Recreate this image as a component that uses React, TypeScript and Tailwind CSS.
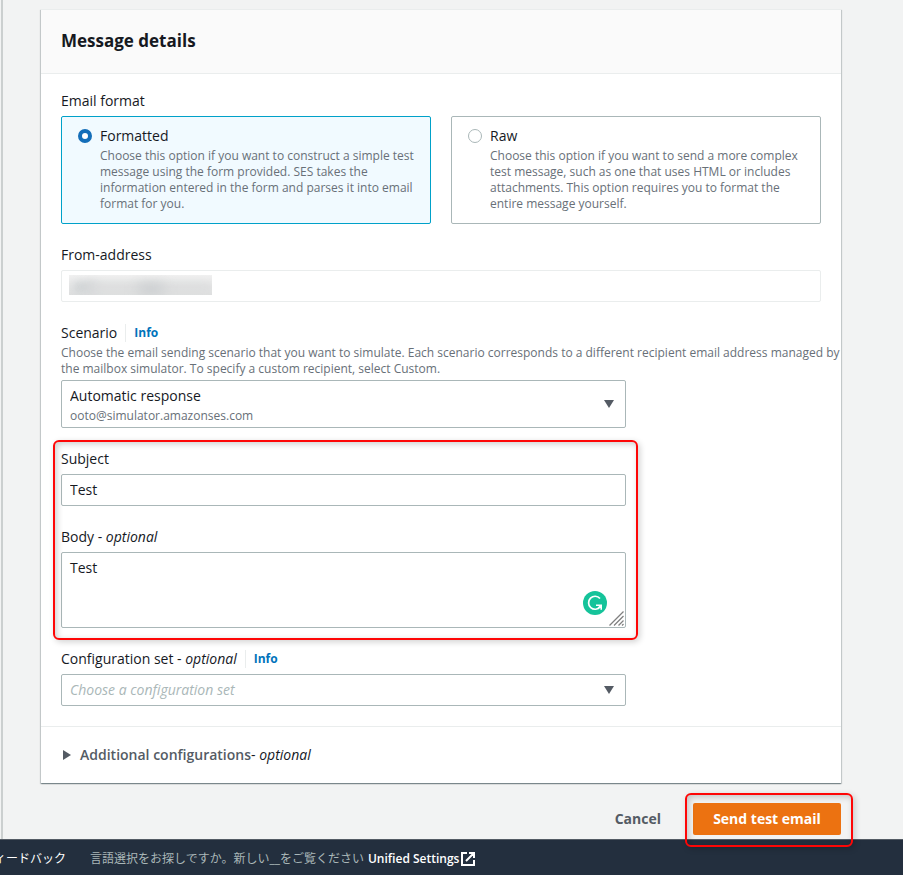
import { useState, type ReactNode } from "react";

const inputBase =
  "block w-full rounded-xs border border-[#aab7b8] bg-white px-2 text-sm text-[#16191f] outline-none";

function Label({ htmlFor, optional, info, children }: { htmlFor?: string; optional?: boolean; info?: boolean; children: ReactNode }) {
  return (
    <div className="flex h-[22px] items-center text-sm leading-[22px]">
      <label htmlFor={htmlFor}>
        {children}
        {optional && (
          <>
            {" - "}
            <i>optional</i>
          </>
        )}
      </label>
      {info && (
        <a href="#info" className="ml-2 border-l border-[#eaeded] pl-2 text-xs leading-[18px] font-bold text-[#0073bb]">
          Info
        </a>
      )}
    </div>
  );
}

function Caret() {
  return (
    <svg viewBox="0 0 10 8" className="pointer-events-none absolute top-1/2 right-3 h-2 w-[10px] -translate-y-1/2" aria-hidden="true">
      <path d="M0 0h10L5 8z" fill="#545b64" />
    </svg>
  );
}

function Tile({ id, title, checked, onSelect, children }: { id: string; title: string; checked: boolean; onSelect: () => void; children: ReactNode }) {
  return (
    <label
      htmlFor={id}
      className={`flex flex-1 gap-2 rounded-xs border px-4 pt-2 pb-[11px] ${checked ? "border-[#00a1c9] bg-[#f1faff]" : "border-[#aab7b8] bg-white"}`}
    >
      <input
        id={id}
        type="radio"
        name="format"
        checked={checked}
        onChange={onSelect}
        className="mt-1 size-[14px] shrink-0 appearance-none rounded-full border border-[#aab7b8] bg-white checked:border-4 checked:border-[#146eb9]"
      />
      <span>
        <span className="block text-sm leading-[22px]">{title}</span>
        <span className="block pt-px text-xs leading-4 text-[#687078]">{children}</span>
      </span>
    </label>
  );
}

function Highlight({ className }: { className: string }) {
  return (
    <div
      className={`pointer-events-none absolute rounded-md border-2 border-[#fe0606] shadow-[2px_2px_6px_rgba(0,0,0,0.18),inset_2px_2px_6px_rgba(0,0,0,0.2)] ${className}`}
    />
  );
}

export default function App() {
  const [format, setFormat] = useState("formatted");
  return (
    <div className="flex min-h-screen flex-col overflow-x-hidden bg-[#f2f3f3] font-['Open_Sans','Noto_Sans_CJK_JP',sans-serif] text-[#16191f]">
      <div className="flex flex-1">
        <div className="w-[3px] shrink-0 border-r-2 border-[#cbcfcf]" />
        <main className="flex-1 pt-[9px] pr-[62px] pb-1 pl-[38px]">
          <section className="border-t border-[#eaeded] bg-white shadow-[0_1px_1px_0_rgba(0,28,36,0.3),1px_1px_1px_0_rgba(0,28,36,0.15),-1px_1px_1px_0_rgba(0,28,36,0.15)]">
            <header className="border-b border-[#eaeded] bg-[#fafafa] px-5 pt-5 pb-[21px]">
              <h2 className="text-[17px] leading-[22px] font-bold">Message details</h2>
            </header>

            <div className="flex flex-col gap-5 px-5 pt-4 pb-5">
              <fieldset>
                <legend className="mb-1 h-[22px] text-sm leading-[22px]">Email format</legend>
                <div className="flex gap-5">
                  <Tile id="formatted" title="Formatted" checked={format === "formatted"} onSelect={() => setFormat("formatted")}>
                    Choose this option if you want to construct a simple test message using the form provided. SES takes the information entered in the form and parses it into email format for you.
                  </Tile>
                  <Tile id="raw" title="Raw" checked={format === "raw"} onSelect={() => setFormat("raw")}>
                    Choose this option if you want to send a more complex test message, such as one that uses HTML or includes attachments. This option requires you to format the entire message yourself.
                  </Tile>
                </div>
              </fieldset>

              <div className="flex flex-col gap-1">
                <Label htmlFor="from">From-address</Label>
                <div className="relative">
                  <input id="from" readOnly className="block h-8 w-full rounded-xs border border-[#eaeded] bg-white px-2 text-sm outline-none" />
                  <div className="absolute top-[5px] left-2 h-5 w-[143px] overflow-hidden bg-linear-to-b from-[#f1f1f1] to-[#dfe0e0]">
                    <div className="absolute top-2 left-1 h-2 w-6 rounded-full bg-[#c6cbce] blur-[5px]" />
                    <div className="absolute top-2 left-4 h-2 w-32 rounded-full bg-[#dadbdc] blur-[4px]" />
                    <div className="absolute top-2 left-17 h-3 w-7 rounded-full bg-[#cccfd1] blur-[6px]" />
                  </div>
                </div>
              </div>

              <div>
                <Label htmlFor="scenario" info>
                  Scenario
                </Label>
                <p className="-mr-5 mb-[3px] pt-px text-xs leading-4 text-[#687078]">
                  Choose the email sending scenario that you want to simulate. Each scenario corresponds to a different recipient email address managed by the mailbox simulator. To specify a custom recipient, select Custom.
                </p>
                <div className="w-3/4 pr-[5px]">
                  <div className="relative">
                    <select id="scenario" className={`${inputBase} h-12 appearance-none pb-4`}>
                      <option>Automatic response</option>
                    </select>
                    <span className="pointer-events-none absolute bottom-1 left-[9px] text-xs leading-4 text-[#687078]">ooto@simulator.amazonses.com</span>
                    <Caret />
                  </div>
                </div>
              </div>

              <div className="w-3/4 pr-[5px]">
                <div className="relative flex flex-col gap-5">
                  <div className="flex flex-col gap-1">
                    <Label htmlFor="subject">Subject</Label>
                    <input id="subject" defaultValue="Test" className={`${inputBase} h-8 pb-[2px]`} />
                  </div>
                  <div className="flex flex-col gap-1">
                    <Label htmlFor="body" optional>
                      Body
                    </Label>
                    <div className="relative">
                      <textarea id="body" defaultValue="Test" className={`${inputBase} h-[76px] resize-none py-1 leading-[22px]`} />
                      <svg viewBox="0 0 24 24" className="absolute right-[19px] bottom-[13px] size-6" aria-hidden="true">
                        <circle cx="12" cy="12" r="12" fill="#15c39a" />
                        <path d="M17 7.500A6.500 6.500 0 1 0 17.200 15.800" fill="none" stroke="#fff" strokeWidth="1.7" />
                        <path d="M13 14.200h5.200M18.200 13.400v5.400M18 14.200l-3.200 3.600" fill="none" stroke="#fff" strokeWidth="1.6" />
                      </svg>
                      <svg viewBox="0 0 15 15" className="pointer-events-none absolute right-[2px] bottom-[2px] size-[15px]" aria-hidden="true">
                        <path d="M0.500 14.500l14-14M5 14.500l9.500-9.500M9.500 14.500l5-5M13 14.500l1.500-1.500" stroke="#808080" strokeWidth="1.3" />
                      </svg>
                    </div>
                  </div>
                  <Highlight className="-top-2 -right-3 -bottom-3 -left-2" />
                </div>
              </div>

              <div className="flex flex-col gap-1">
                <Label htmlFor="config" optional info>
                  Configuration set
                </Label>
                <div className="w-3/4 pr-[5px]">
                  <div className="relative">
                    <select id="config" className="block h-8 w-full appearance-none rounded-xs border border-[#aab7b8] bg-white px-2 text-sm text-[#aab7b8] italic outline-none">
                      <option>Choose a configuration set</option>
                    </select>
                    <Caret />
                  </div>
                </div>
              </div>
            </div>

            <div className="border-t border-[#eaeded] px-5 py-[17px]">
              <button type="button" className="flex items-center text-sm leading-[22px]">
                <svg viewBox="0 0 8 10" className="mr-[9px] ml-[2px] h-[10px] w-2" aria-hidden="true">
                  <path d="M0 0v10l8-5z" fill="#545b64" />
                </svg>
                <span className="font-semibold text-[#545b64]">Additional configurations</span>
                <span>
                  - <i>optional</i>
                </span>
              </button>
            </div>
          </section>

          <div className="mt-5 flex justify-end gap-3">
            <button type="button" className="h-8 px-5 text-sm font-bold text-[#545b64]">
              Cancel
            </button>
            <div className="relative z-10">
              <button type="button" className="h-8 w-[148px] rounded-xs bg-[#ec7211] text-sm font-bold text-white">
                Send test email
              </button>
              <Highlight className="-top-[10px] -right-3 -bottom-3 -left-2" />
            </div>
          </div>
        </main>
      </div>

      <footer className="flex h-9 items-center border-t border-[#545b64] bg-[#232f3e] pt-[2px] text-xs whitespace-nowrap text-white">
        <a href="#feedback" className="flex w-[66px] shrink-0 justify-end overflow-hidden">
          フィードバック
        </a>
        <span className="ml-6 text-[#aab7b8]">言語選択をお探しですか。新しい__をご覧ください</span>
        <a href="#settings" className="ml-1 flex items-center gap-[2px] font-semibold">
          Unified Settings
          <svg viewBox="0 0 14 14" className="size-[14px]" fill="none" stroke="#fff" strokeWidth="2" aria-hidden="true">
            <path d="M6 1H1v12h12V8M8 1h5v5M13 1L5 9" />
          </svg>
        </a>
      </footer>
    </div>
  );
}
